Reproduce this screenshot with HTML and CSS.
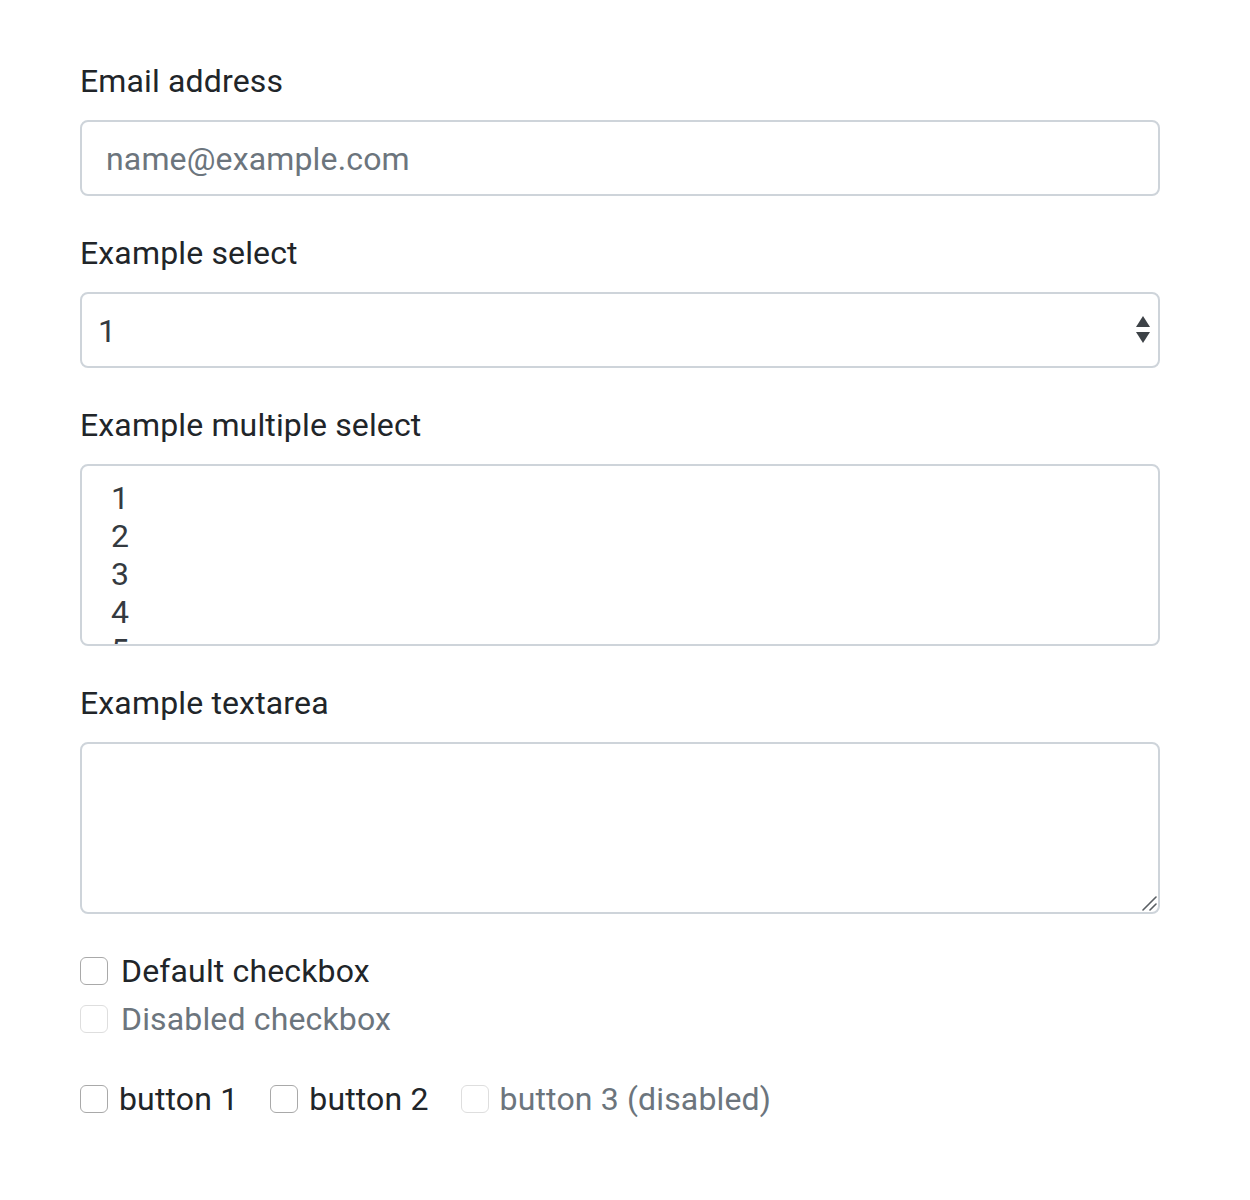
FILE: index.html
```html
<!DOCTYPE html>
<html lang="en">
<head>
<meta charset="utf-8">
<title>Form</title>
<link rel="stylesheet" href="styles.css">
</head>
<body>
<form class="form">
  <div class="form-group">
    <label class="label" for="email">Email address</label>
    <input class="control" id="email" type="email" placeholder="name@example.com">
  </div>
  <div class="form-group">
    <label class="label" for="sel">Example select</label>
    <div class="select-wrap">
      <div class="control select" id="sel">1</div>
      <svg class="arrows" width="16" height="30" viewBox="0 0 16 30"><path d="M8 1 L15 12 L1 12 Z" fill="#3d4247"/><path d="M1 17 L15 17 L8 28 Z" fill="#3d4247"/></svg>
    </div>
  </div>
  <div class="form-group">
    <label class="label">Example multiple select</label>
    <div class="control listbox">
      <div class="option">1</div>
      <div class="option">2</div>
      <div class="option">3</div>
      <div class="option">4</div>
      <div class="option">5</div>
    </div>
  </div>
  <div class="form-group">
    <label class="label" for="ta">Example textarea</label>
    <div class="ta-wrap">
      <textarea class="control textarea" id="ta" rows="3"></textarea>
      <svg class="grip" width="16" height="16" viewBox="0 0 16 16"><path d="M15 2 L2 15 M15 9 L9 15" stroke="#5a5f64" stroke-width="1.6" stroke-linecap="round"/></svg>
    </div>
  </div>
  <div class="form-group checks">
    <label class="check"><input type="checkbox" class="box"><span>Default checkbox</span></label>
    <label class="check disabled"><input type="checkbox" class="box" disabled><span>Disabled checkbox</span></label>
  </div>
  <div class="inline-checks">
    <label class="check inline"><input type="checkbox" class="box"><span>button 1</span></label>
    <label class="check inline"><input type="checkbox" class="box"><span>button 2</span></label>
    <label class="check inline disabled"><input type="checkbox" class="box" disabled><span>button 3 (disabled)</span></label>
  </div>
</form>
</body>
</html>
```
FILE: styles.css
```css
html, body {
  margin: 0;
  padding: 0;
  background: #fff;
}
body {
  font-family: Roboto, "Liberation Sans", sans-serif;
  font-size: 32px;
  line-height: 48px;
  letter-spacing: 0.15px;
  color: #212529;
}
.form {
  width: 1080px;
  padding: 56px 80px 40px;
}
.form-group {
  margin-bottom: 32px;
}
.label {
  display: block;
  padding-top: 1px;
  margin-bottom: 15px;
}
.control {
  display: block;
  box-sizing: border-box;
  width: 100%;
  height: 76px;
  padding: 13px 24px 11px;
  font-family: inherit;
  font-size: 32px;
  line-height: 48px;
  letter-spacing: 0.15px;
  color: #495057;
  background: #fff;
  border: 2px solid #ced4da;
  border-radius: 8px;
  margin: 0;
  outline: none;
}
.control::placeholder {
  color: #6c757d;
  opacity: 1;
}
.select-wrap,
.ta-wrap {
  position: relative;
}
.select {
  padding-left: 16px;
  color: #343a40;
}
.arrows {
  position: absolute;
  right: 9px;
  top: 23px;
}
.listbox {
  height: 182px;
  overflow: hidden;
  padding: 13px 24px 0 24px;
  color: #343a40;
}
.option {
  height: 38px;
  line-height: 38px;
  padding-left: 5px;
}
.textarea {
  height: 172px;
  resize: none;
}
.grip {
  position: absolute;
  right: 3px;
  bottom: 3px;
}
.checks {
  margin-bottom: 32px;
}
.check {
  display: flex;
  align-items: center;
  height: 48px;
  padding-top: 2px;
  box-sizing: border-box;
}
.box {
  -webkit-appearance: none;
  appearance: none;
  box-sizing: border-box;
  width: 28px;
  height: 28px;
  margin: 0 13px 0 0;
  border: 1.5px solid #a9a9a9;
  border-radius: 6px;
  background: #fff;
  flex: none;
}
.disabled {
  color: #6c757d;
}
.disabled .box {
  border-color: #dedede;
}
.inline-checks {
  display: flex;
}
.inline {
  display: inline-flex;
  margin-right: 32px;
}
.inline .box {
  margin-right: 11px;
}
```
